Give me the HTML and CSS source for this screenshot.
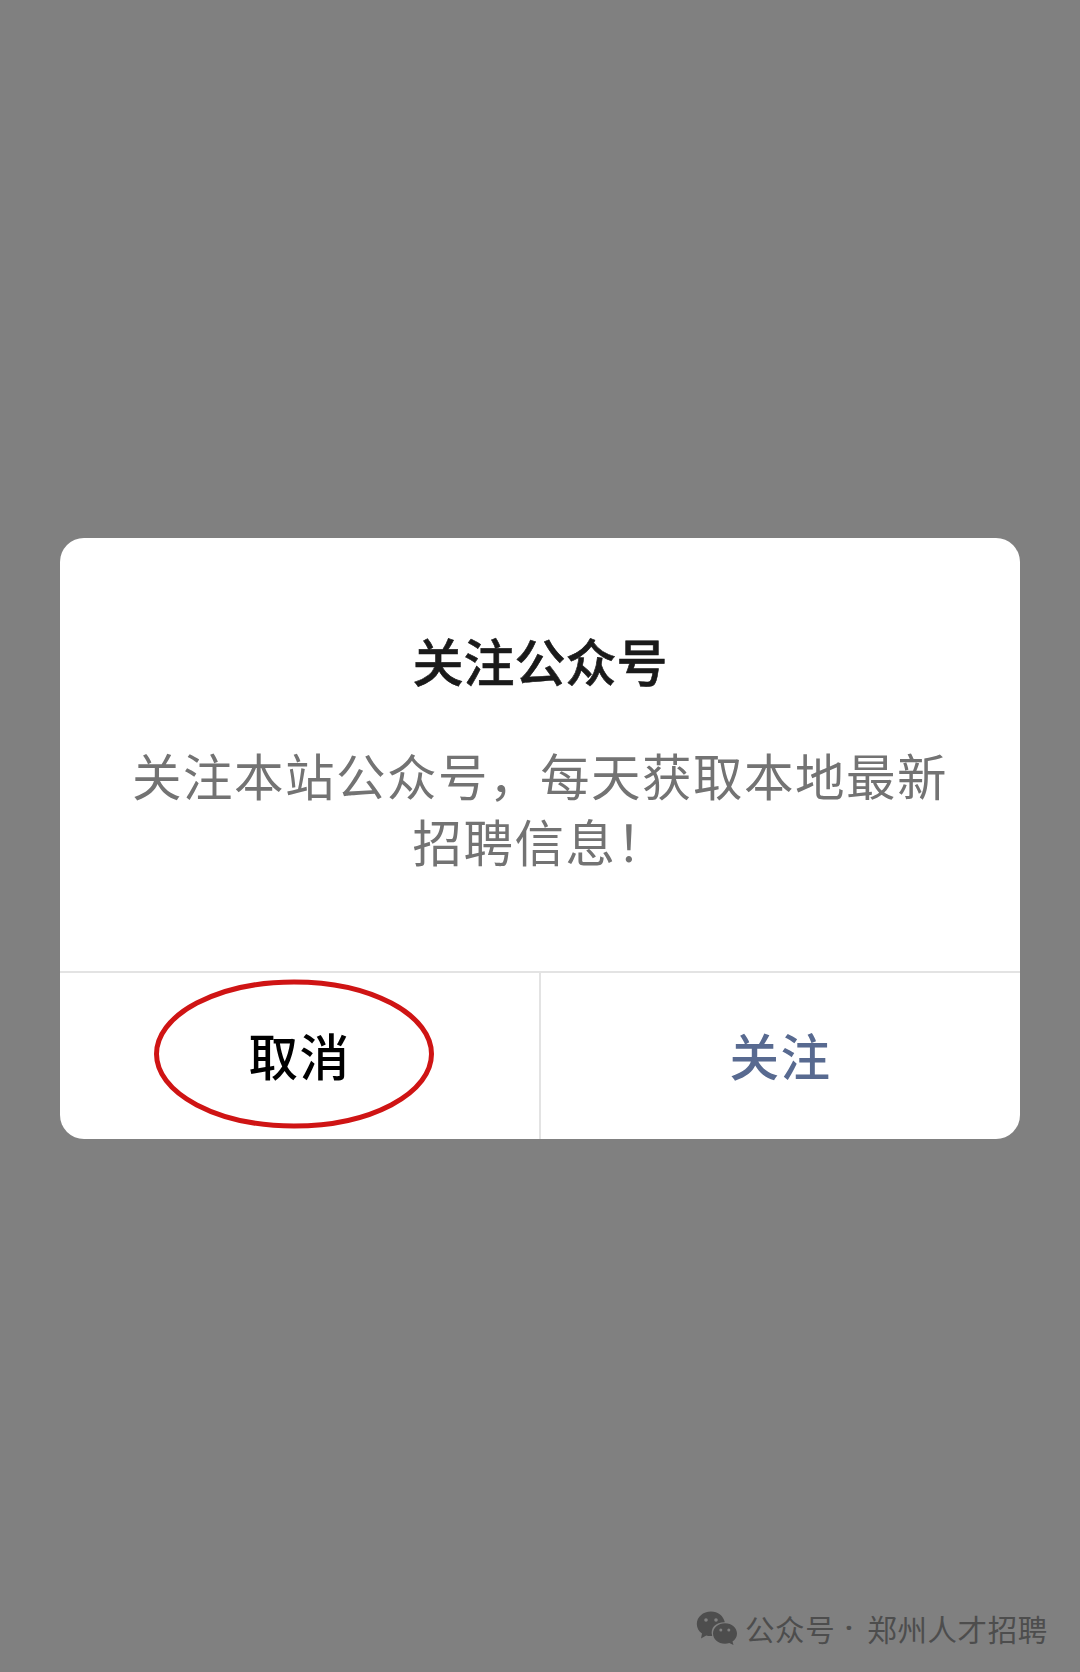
FILE: index.html
```html
<!DOCTYPE html>
<html lang="zh-CN">
<head>
    <meta charset="UTF-8">
    <meta name="viewport" content="width=device-width, initial-scale=1.0">
    <title>关注公众号</title>
    <link rel="stylesheet" href="styles.css">
</head>
<body>
    <div class="dialog">
        <div class="dialog-content">
            <h2>关注公众号</h2>
            <p>关注本站公众号，每天获取本地最新招聘信息！</p>
        </div>
        <div class="dialog-buttons">
            <button class="cancel">
                取消
                <svg class="circle" width="280" height="150" viewBox="0 0 280 150">
                    <ellipse cx="140" cy="75" rx="137.5" ry="72" />
                </svg>
            </button>
            <button class="follow">关注</button>
        </div>
    </div>

    <div class="account">
        <svg width="42" height="34" viewBox="0 0 42 34">
            <path d="M15 .5C7 .5 .8 6 .8 13c0 4 2 7.200 5.200 9.600L5 27.500l5.200-3c1.800.5 4 .7 6 .5C13.800 16.500 20 11 28.800 11.200 27.500 5 22 .5 15 .5z" />
            <path d="M29 12.300c-6.800 0-12 4.500-12 10.200s5.200 10.200 12 10.200c1.500 0 3-.2 4.300-.6L37.500 34l-1-3.400c2.800-1.900 4.500-4.800 4.500-8.100 0-5.700-5.200-10.200-12-10.200z" />
            <g class="eyes">
                <circle cx="10" cy="9" r="1.800" />
                <circle cx="20" cy="9" r="1.800" />
                <circle cx="24.800" cy="19" r="1.500" />
                <circle cx="32.800" cy="19" r="1.500" />
            </g>
        </svg>
        <span class="label">公众号</span>
        <span class="dot">·</span>
        <span class="name">郑州人才招聘</span>
    </div>
</body>
</html>
```

FILE: styles.css
```css
body {
    font-family: "Noto Sans CJK SC", sans-serif;
    margin: 0;
    padding: 538px 60px 0;
    box-sizing: border-box;
    height: 1672px;
    background: #808080;
    display: flex;
    flex-direction: column;
    justify-content: space-between;
    overflow: hidden;
}

.dialog {
    height: 601px;
    background: #fff;
    border-radius: 24px;
    display: flex;
    flex-direction: column;
    overflow: hidden;
}

.dialog-content {
    flex: 1;
    padding: 87px 69px 0;
    text-align: center;
}

.dialog-content h2 {
    margin: 0 0 47px;
    color: #1a1a1a;
    font-size: 51px;
    font-weight: 500;
    letter-spacing: 0;
    line-height: 70px;
    -webkit-text-stroke: 0.6px #1a1a1a;
}

.dialog-content p {
    margin: 0;
    color: #737373;
    font-size: 49.500px;
    letter-spacing: 1.500px;
    line-height: 66px;
}

.dialog-buttons {
    height: 166px;
    border-top: 2px solid #e3e3e3;
    display: flex;
}

.dialog-buttons button {
    flex: 1;
    position: relative;
    padding: 0 0 3px;
    border: none;
    background: none;
    font-family: inherit;
    font-size: 49.500px;
    font-weight: 500;
    letter-spacing: 1.400px;
}

.dialog-buttons .cancel {
    border-right: 2px solid #e3e3e3;
    color: #000;
}

.dialog-buttons .follow {
    color: #586a90;
}

/* red ring around the cancel button */
.circle {
    position: absolute;
    left: 94px;
    top: 6px;
    fill: none;
    stroke: #cf1414;
    stroke-width: 5;
}

.account {
    display: flex;
    align-items: center;
    margin: 0 -60px 0 636px;
    height: 86px;
    color: #4d4d4d;
    font-size: 29.500px;
    letter-spacing: 0.6px;
    line-height: 40px;
    padding-bottom: 2px;
    box-sizing: border-box;
    white-space: nowrap;
}

.account svg {
    flex: none;
    fill: #4d4d4d;
}

.account .eyes {
    fill: #808080;
}

.account .label {
    margin-left: 7px;
}

.account .dot {
    width: 28px;
    margin-right: 4px;
    text-align: center;
    font-family: Roboto, sans-serif;
    font-weight: bold;
}
```
